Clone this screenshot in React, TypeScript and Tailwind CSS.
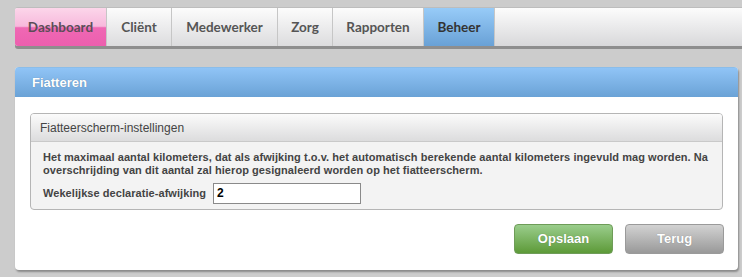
export default function App() {
  const tabs = [
    { label: "Dashboard", w: "w-[92px]", cls: "bg-[linear-gradient(#fcd6ea_0%,#f7b9dc_48%,#ef68b4_52%,#ec5fae_100%)] text-[#5b4d57]" },
    { label: "Cliënt", w: "w-[65px]", cls: "bg-[linear-gradient(#fcfcfc,#dcdcde)] text-[#555]" },
    { label: "Medewerker", w: "w-[106px]", cls: "bg-[linear-gradient(#fcfcfc,#dcdcde)] text-[#555]" },
    { label: "Zorg", w: "w-[55px]", cls: "bg-[linear-gradient(#fcfcfc,#dcdcde)] text-[#555]" },
    { label: "Rapporten", w: "w-[91px]", cls: "bg-[linear-gradient(#fcfcfc,#dcdcde)] text-[#555]" },
    { label: "Beheer", w: "w-[71px]", cls: "bg-[linear-gradient(#97cbf8,#69a1d6)] text-[#333]" },
  ];

  return (
    <div className="w-[742px] h-[277px] overflow-hidden bg-[#cccccc] pl-[15px] pt-[7px] font-['Liberation_Sans',Arial,sans-serif]">
      {/* Top menu */}
      <div className="flex h-[39px] w-[740px] rounded-l-[3px] border-t border-[#bdbdbd] bg-[linear-gradient(#fcfcfc,#d8d8da)] shadow-[0_3px_0_#8e8e8e] overflow-hidden">
        {tabs.map((t) => (
          <div
            key={t.label}
            className={`${t.w} ${t.cls} flex items-center justify-center border-r border-[#c6c6c6] text-[13.5px] font-bold font-['Lato',sans-serif]`}
          >
            {t.label}
          </div>
        ))}
        <div className="flex-1" />
      </div>

      {/* Panel */}
      <div className="mt-[21px] w-[723px] h-[203px] rounded-[4px] bg-white shadow-[1px_2px_2px_#8a8a8a] overflow-hidden">
        <div className="h-[30px] bg-[linear-gradient(#90c4f6,#6aa2d6)] border-t border-[#8bbde9] pl-[17px] flex items-center text-white text-[13px] font-bold [text-shadow:0_0_1px_rgba(0,0,0,0.3)]">
          Fiatteren
        </div>

        <div className="px-[15px] pt-[16px]">
          <div className="rounded-[4px] border border-[#b5b5b5] bg-[#f3f3f3] overflow-hidden">
            <div className="h-[28px] bg-[linear-gradient(#fbfbfb,#dcdcdd)] border-b border-[#c9c9c9] pl-[9px] flex items-center text-[12px] text-[#444]">
              Fiatteerscherm-instellingen
            </div>
            <div className="pl-[12px] pr-[4px] pt-[9px] pb-[5px] text-[11px] font-bold text-[#444] leading-[13px] tracking-[0.06px]">
              <p>
                Het maximaal aantal kilometers, dat als afwijking t.o.v. het automatisch berekende aantal kilometers ingevuld mag worden. Na overschrijding van dit aantal zal hierop gesignaleerd worden op het fiatteerscherm.
              </p>
              <div className="mt-[6px] flex items-center gap-[7px]">
                <span>Wekelijkse declaratie-afwijking</span>
                <div className="w-[148px] h-[21px] border border-[#8a8a8a] bg-white pl-[3px] flex items-center text-[12px] text-black">
                  2
                </div>
              </div>
            </div>
          </div>
        </div>

        <div className="flex justify-end gap-[12px] pr-[14px] mt-[14px]">
          <div className="w-[99px] h-[30px] rounded-[4px] border border-[#6e9c58] bg-[linear-gradient(#9acd8c,#5d9a38)] flex items-center justify-center text-white text-[13px] font-bold [text-shadow:0_0_1px_rgba(0,0,0,0.3)]">
            Opslaan
          </div>
          <div className="w-[99px] h-[30px] rounded-[4px] border border-[#9a9a9a] bg-[linear-gradient(#d2d2d2,#999999)] flex items-center justify-center text-white text-[13px] font-bold [text-shadow:0_0_1px_rgba(0,0,0,0.3)]">
            Terug
          </div>
        </div>
      </div>
    </div>
  );
}
